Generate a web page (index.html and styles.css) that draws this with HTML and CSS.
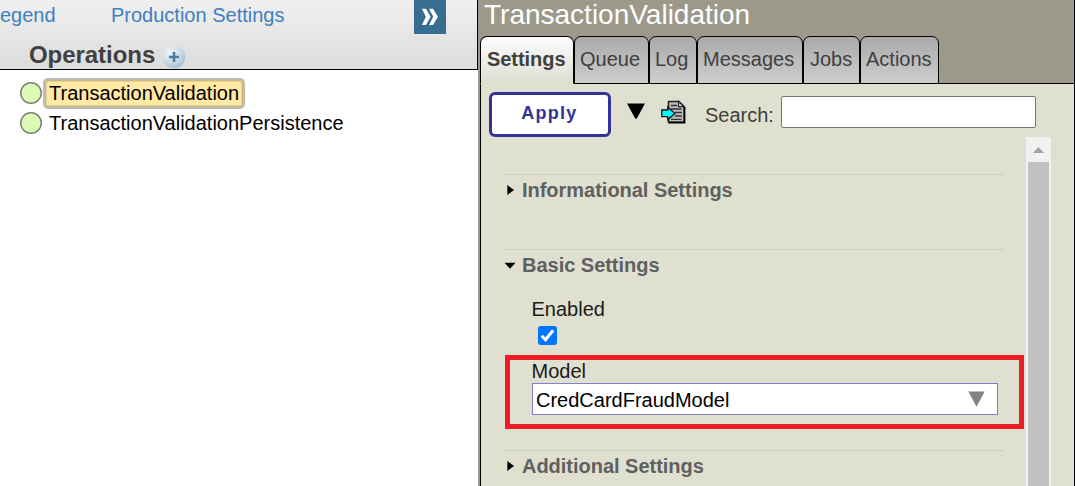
FILE: index.html
```html
<!DOCTYPE html>
<html lang="en">
<head>
<meta charset="utf-8">
<title>Production Configuration</title>
<link rel="stylesheet" href="styles.css">
</head>
<body>
<div class="app">
  <section class="diagram">
    <header class="diagram-head">
      <nav class="links">
        <a class="legend">egend</a>
        <a class="production">Production Settings</a>
        <span class="expand"><svg width="32" height="34" viewBox="0 0 32 34"><path d="M8 8.800h4l4.600 8-4.600 8.200H8l3.800-8.200zM15 8.800h4l5 8-5 8.200h-4l4.200-8.200z" fill="#fff"/></svg></span>
      </nav>
      <div class="ops">
        <h2>Operations</h2>
        <svg class="plus" width="24" height="24" viewBox="0 0 24 24">
          <defs><radialGradient id="orb" cx=".35" cy=".3" r=".75"><stop offset="0" stop-color="#f1f5f8"/><stop offset=".55" stop-color="#cfdde6"/><stop offset="1" stop-color="#a5bfd0"/></radialGradient></defs>
          <circle cx="12" cy="12" r="11.300" fill="url(#orb)"/>
          <path d="M7 12h10M12 7v10" stroke="#4c7c9f" stroke-width="2.600"/>
        </svg>
      </div>
    </header>
    <ul class="hosts">
      <li><i class="dot"></i><span class="host selected">TransactionValidation</span></li>
      <li><i class="dot"></i><span class="host">TransactionValidationPersistence</span></li>
    </ul>
  </section>

  <section class="details">
    <h1>TransactionValidation</h1>
    <nav class="tabs">
      <a class="tab active">Settings</a>
      <a class="tab queue">Queue</a>
      <a class="tab log">Log</a>
      <a class="tab messages">Messages</a>
      <a class="tab jobs">Jobs</a>
      <a class="tab actions">Actions</a>
    </nav>
    <div class="pane">
      <div class="toolbar">
        <button class="apply">Apply</button>
        <svg class="caret" width="18" height="16" viewBox="0 0 18 16"><path d="M0 .5h18L9.800 15.500H8.200z"/></svg>
        <svg class="goto" width="25" height="24" viewBox="0 0 25 24">
          <path d="M7.500 1.500h10.500l5 5v15.500H7.500z" fill="#bdbdbd" stroke="#222" stroke-width="1.600"/>
          <path d="M17.500 1.500v5.200H23z" fill="#e8e8e8" stroke="#222" stroke-width="1.200"/>
          <path d="M10 5.500h6M10 9h10.500M14 12.500h7M14 16h7M10 19.300h10.500" stroke="#333" stroke-width="1.300"/>
          <path d="M7.500 22.700h16.200V7" fill="none" stroke="#000" stroke-width="1.400"/>
          <path d="M.8 10h6V7.200l7.200 6.200-7.200 6.200v-3H.8z" fill="#0ff" stroke="#111" stroke-width="1.300"/>
        </svg>
        <label class="search-label">Search:</label>
        <input class="search" type="text">
      </div>
      <div class="scroller">
        <div class="settings">
          <section class="group info">
            <h3><svg class="mark" width="12" height="12" viewBox="0 0 12 12"><path d="M3.300 1v10L10 6z"/></svg>Informational Settings</h3>
          </section>
          <section class="group basic">
            <h3><svg class="mark" width="12" height="12" viewBox="0 0 12 12"><path d="M.5 3.700h11L6.500 9.200h-1z"/></svg>Basic Settings</h3>
            <div class="field">
              <div class="name">Enabled</div>
              <span class="check"><svg width="19" height="19" viewBox="0 0 19 19"><path d="M3.700 9.800l3.800 3.900 7.700-9.500" fill="none" stroke="#fff" stroke-width="3"/></svg></span>
            </div>
            <div class="field model">
              <div class="name">Model</div>
              <div class="combo"><span>CredCardFraudModel</span><svg width="17" height="16" viewBox="0 0 17 16"><path d="M.3.5h16.400L8.500 15.800z" fill="#858184"/></svg></div>
              <div class="highlight"></div>
            </div>
          </section>
          <section class="group additional">
            <h3><svg class="mark" width="12" height="12" viewBox="0 0 12 12"><path d="M3.300 1v10L10 6z"/></svg>Additional Settings</h3>
          </section>
        </div>
        <div class="scrollbar">
          <div class="up"><svg width="11" height="6" viewBox="0 0 11 6"><path d="M5.500 0L11 6H0z" fill="#a3a3a3"/></svg></div>
          <div class="thumb"></div>
        </div>
      </div>
    </div>
  </section>
</div>
</body>
</html>
```
FILE: styles.css
```css
* { box-sizing: border-box; }
body { margin: 0; font: 20px/30px "Liberation Sans", Arial, sans-serif; color: #000; overflow: hidden; }
h1, h2, h3, ul { margin: 0; padding: 0; }
svg { display: block; flex: none; }
.app { display: flex; width: 1075px; height: 486px; }

.diagram { width: 478px; background: #fff; }
.diagram-head { height: 70px; border-right: 1px solid #000; border-bottom: 1px solid #000; background: linear-gradient(#f0f0f0, #dcdcdc); }
.links { display: flex; height: 40px; color: #4080bf; }
.legend { width: 111px; }
.production { width: 303px; }
.expand { width: 32px; height: 34px; background: #366d90; }
.ops { display: flex; padding-left: 29px; }
.ops h2 { width: 133px; font-size: 24px; line-height: 30px; color: #404040; letter-spacing: -.05px; }
.plus { margin-top: 5px; }
.hosts { list-style: none; padding: 8px 0 0 20px; }
.hosts li { display: flex; align-items: center; height: 30px; }
.dot { width: 22px; height: 22px; margin-right: 1px; border-radius: 50%; background: #dcfcb4; box-shadow: inset 0 0 0 1.500px #808080; }
.host { padding-left: 6px; white-space: nowrap; }
.selected { width: 202px; height: 31px; padding-left: 4px; line-height: 26px; border: 2px solid #bdbab2; border-radius: 5px; background: #ffe9a5; box-shadow: inset 0 0 0 1.500px #cbb982; }

.details { display: flex; flex-direction: column; width: 597px; padding-left: 2px; background: #9c998b; border-right: 1px solid #000; }
.details h1 { height: 36px; padding-left: 4px; font-size: 28px; line-height: 29px; font-weight: 400; color: #fff; }
.tabs { display: flex; height: 48px; border-bottom: 1px solid #000; }
.tab { height: 48px; padding-left: 5px; line-height: 44px; border: 1px solid #000; border-radius: 7px 7px 0 0; background: linear-gradient(#a9a9a9, #cecece); color: #404040; }
.active { width: 94px; padding-left: 6px; font-weight: 700; letter-spacing: -.05px; background: linear-gradient(#fcfcff, #dfe0d0); border-bottom-color: #dfe0d0; }
.queue { width: 75px; }
.log { width: 48px; }
.messages { width: 106px; }
.jobs { width: 57px; padding-left: 6px; }
.actions { width: 79px; }
.pane { flex: 1; border-left: 1px solid #000; background: #dfe0d0; min-height: 0; }
.toolbar { display: flex; height: 53px; padding-left: 8px; }
.apply { width: 122px; height: 45px; margin-top: 8px; padding: 0 1px 2px 0; font: bold 18px "Liberation Sans", Arial, sans-serif; letter-spacing: 1.250px; color: #333399; background: #fff; border: 3px solid #333399; border-radius: 6px; }
.caret { margin: 19px 0 0 16px; }
.goto { margin: 16px 0 0 16px; }
.search-label { width: 76px; margin: 16px 0 0 19px; color: #404040; }
.search { width: 255px; height: 32px; margin-top: 12px; border: 1px solid #767676; border-radius: 2px; background: #fff; }
.scroller { display: flex; height: 349px; }
.settings { width: 545px; padding: 37px 0 0 22px; }
.group { width: 501px; border-top: 1px solid #cdcdcf; }
.info { height: 75px; }
.basic { height: 201px; }
.group h3 { display: flex; align-items: center; gap: 6px; font-size: 20px; line-height: 30px; color: #606060; letter-spacing: -.02px; }
.mark { margin-left: 1px; }
.field { padding-left: 29px; color: #1a1a1a; }
.basic h3 { margin-bottom: 14px; }
.name { height: 30px; margin-left: -.5px; }
.check { display: block; width: 19px; height: 19px; margin: 2px 0 0 6px; border-radius: 3px; background: #0075ff; }
.model { position: relative; margin-top: 11px; }
.model .name { height: 27px; }
.combo { display: flex; justify-content: space-between; align-items: center; width: 466px; height: 32px; padding: 0 12px 0 3px; border: 1px solid #8080cc; background: #fff; color: #000; }
.combo span { padding-top: 2px; }
.highlight { position: absolute; left: 2px; top: -1px; width: 519px; height: 74px; border: 5px solid #ee1c23; }
.scrollbar { display: flex; flex-direction: column; width: 25px; background: #f1f1f1; }
.up { display: flex; justify-content: center; height: 25px; padding-top: 10px; }
.thumb { flex: 1; margin: 0 2px; background: #c1c1c1; }
```
